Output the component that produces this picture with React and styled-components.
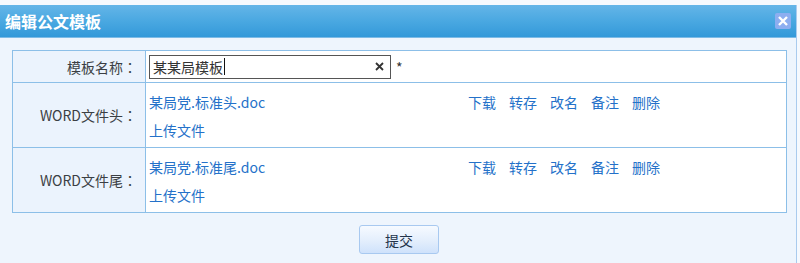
import React from "react";
import styled, { createGlobalStyle } from "styled-components";

const GlobalStyle = createGlobalStyle`
  html, body {
    margin: 0;
    padding: 0;
    background: #f5f9fe;
    font-family: "Noto Sans CJK SC", "Noto Sans", sans-serif;
    font-size: 14px;
  }
`;

const Dialog = styled.div`
  width: 796px;
  margin-top: 5px;
  background: #eef5fd;
  border-right: 1px solid #a9cbee;
  min-height: 258px;
`;

const TitleBar = styled.div`
  height: 33px;
  display: flex;
  align-items: center;
  justify-content: space-between;
  padding: 0 5px 0 5px;
  background: linear-gradient(to bottom, #64b5e8 0%, #4aa8e1 50%, #3399d9 100%);
  border-bottom: 1px solid #7dbbe6;
  box-sizing: border-box;
`;

const Title = styled.h2`
  margin: 0;
  color: #fff;
  font-size: 16px;
  font-weight: bold;
  line-height: 20px;
`;

const CloseButton = styled.button`
  width: 16px;
  height: 16px;
  padding: 0;
  border: none;
  border-radius: 2px;
  background: #8daef0;
  display: flex;
  align-items: center;
  justify-content: center;
  cursor: pointer;
`;

const Body = styled.div`
  padding: 12px 10px 10px 12px;
`;

const Table = styled.table`
  width: 775px;
  border-collapse: collapse;
  border: 1px solid #8cbfe8;
  background: #fff;
`;

const Row = styled.tr`
  height: ${(p) => p.$height}px;
`;

const LabelCell = styled.td`
  width: 124px;
  padding: 0 8px 0 0;
  text-align: right;
  vertical-align: middle;
  background: #ebf3fd;
  border: 1px solid #8cbfe8;
  color: #3b3f44;
  line-height: 20px;
`;

const Colon = styled.span`
  font-family: "Noto Sans CJK JP", "Noto Sans CJK SC", sans-serif;
`;

const ValueCell = styled.td`
  padding: ${(p) => (p.$files ? "5px 3px 3px 3px" : "0 3px")};
  vertical-align: ${(p) => (p.$files ? "top" : "middle")};
  border: 1px solid #8cbfe8;
`;

const FieldLine = styled.div`
  display: flex;
  align-items: center;
`;

const Field = styled.div`
  width: 242px;
  height: 24px;
  box-sizing: border-box;
  border: 1px solid #555;
  display: flex;
  align-items: center;
  padding: 0 6px 0 3px;
  color: #333;
  background: #fff;
`;

const FieldText = styled.span`
  flex: 1;
  display: flex;
  align-items: center;
  line-height: 20px;
`;

const Caret = styled.span`
  width: 1px;
  height: 17px;
  background: #111;
  margin-left: 1px;
`;

const Required = styled.span`
  margin-left: 5px;
  color: #333;
  font-size: 14px;
`;

const FileLine = styled.div`
  display: flex;
  align-items: center;
  height: 28px;
`;

const Link = styled.a`
  color: #2471c9;
  text-decoration: none;
  cursor: pointer;
  line-height: 20px;
`;

const FileName = styled(Link)`
  width: 319px;
`;

const Actions = styled.div`
  display: flex;
  gap: 13px;
`;

const Footer = styled.div`
  display: flex;
  justify-content: center;
  padding-top: 12px;
`;

const SubmitButton = styled.button`
  width: 80px;
  height: 29px;
  border: 1px solid #a8c9f0;
  border-radius: 3px;
  background: linear-gradient(to bottom, #f6faff 0%, #e3eefc 55%, #cfe2fb 100%);
  color: #22334a;
  font-family: inherit;
  font-size: 14px;
  cursor: pointer;
`;

const files = [
  { label: "WORD文件头", name: "某局党.标准头.doc" },
  { label: "WORD文件尾", name: "某局党.标准尾.doc" },
];

const actions = ["下载", "转存", "改名", "备注", "删除"];

const ClearIcon = () => (
  <svg width="9" height="9" viewBox="0 0 9 9">
    <path d="M1 1 L8 8 M8 1 L1 8" stroke="#333" strokeWidth="1.8" />
  </svg>
);

const CloseIcon = () => (
  <svg width="12" height="12" viewBox="0 0 12 12">
    <path d="M2 2 L10 10 M10 2 L2 10" stroke="#fff" strokeWidth="2.4" />
  </svg>
);

const App = () => (
  <>
    <GlobalStyle />
    <Dialog>
      <TitleBar>
        <Title>编辑公文模板</Title>
        <CloseButton aria-label="关闭">
          <CloseIcon />
        </CloseButton>
      </TitleBar>
      <Body>
        <Table>
          <tbody>
            <Row $height={32}>
              <LabelCell>
                模板名称<Colon>：</Colon>
              </LabelCell>
              <ValueCell>
                <FieldLine>
                  <Field>
                    <FieldText>
                      某某局模板
                      <Caret />
                    </FieldText>
                    <ClearIcon />
                  </Field>
                  <Required>*</Required>
                </FieldLine>
              </ValueCell>
            </Row>
            {files.map((f) => (
              <Row $height={65} key={f.label}>
                <LabelCell>
                  {f.label}
                  <Colon>：</Colon>
                </LabelCell>
                <ValueCell $files>
                  <FileLine>
                    <FileName>{f.name}</FileName>
                    <Actions>
                      {actions.map((a) => (
                        <Link key={a}>{a}</Link>
                      ))}
                    </Actions>
                  </FileLine>
                  <FileLine>
                    <Link>上传文件</Link>
                  </FileLine>
                </ValueCell>
              </Row>
            ))}
          </tbody>
        </Table>
        <Footer>
          <SubmitButton>提交</SubmitButton>
        </Footer>
      </Body>
    </Dialog>
  </>
);

export default App;
